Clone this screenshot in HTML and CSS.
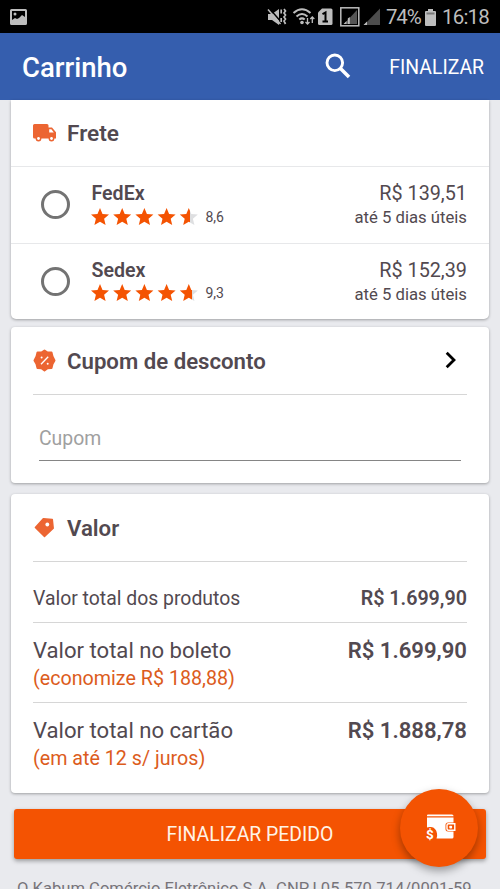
FILE: index.html
```html
<!DOCTYPE html>
<html lang="pt-BR">
<head>
<meta charset="utf-8">
<title>Carrinho</title>
<link rel="stylesheet" href="styles.css">
</head>
<body>
<svg class="defs" width="0" height="0" aria-hidden="true">
  <defs>
    <linearGradient id="part86"><stop offset=".54" stop-color="#f45302"/><stop offset=".54" stop-color="#dedfe1"/></linearGradient>
    <linearGradient id="part93"><stop offset=".7" stop-color="#f45302"/><stop offset=".7" stop-color="#dedfe1"/></linearGradient>
    <path id="star" d="M9 0l2.500 5.900 6.500.6-4.900 4.200 1.500 6.300L9 13.700 3.400 17l1.500-6.300L0 6.500l6.500-.6z"/>
    <g id="four" fill="#f45302"><use href="#star"/><use href="#star" x="22.2"/><use href="#star" x="44.4"/><use href="#star" x="66.6"/></g>
  </defs>
</svg>
<div class="screen">
  <div class="status">
    <svg class="photo" width="17" height="16" viewBox="0 0 17 16"><path fill="#bdbdbd" fill-rule="evenodd" d="M1.500 0h14Q17 0 17 1.500v13q0 1.500-1.500 1.500h-14Q0 16 0 14.500v-13Q0 0 1.500 0zM2 2v9l3-2 2 1 2-1 3-3 3 2V2z"/><circle cx="5" cy="5" r="1.500" fill="#bdbdbd"/></svg>
    <svg class="indicators" width="115" height="24" viewBox="266 5 115 24">
      <path fill="#bdbdbd" d="M268 14h4l7-5v16l-7-5h-4z"/>
      <path d="M269 8l13 15" stroke="#000" stroke-width="1.500"/>
      <path d="M268 9.500l12.500 14.500" stroke="#bdbdbd" stroke-width="1.500"/>
      <path d="M281.200 9.500v4M281.200 18v4M284 9l1.500 2-1.500 2 1.500 2-1.500 2 1.500 2-1.500 2 1.500 3" stroke="#bdbdbd" stroke-width="1.700" fill="none"/>
      <g fill="none" stroke="#bdbdbd" stroke-width="2"><path d="M293.500 13q8.500-7.500 17 0M296.500 16.500q5.500-5 11 0M299.300 19.500q2.700-2.300 5.400 0"/><path stroke-width="1.300" d="M307.500 18v6m-2-2l2 2 2-2M312.300 23v-6m-2 2l2-2 2 2"/></g>
      <circle cx="302" cy="22.500" r="1.800" fill="#bdbdbd"/>
      <path fill="#bdbdbd" d="M322 8.500h9q1.500 0 1.500 1.500v13.500q0 1.500-1.500 1.500h-11.500q-1.500 0-1.500-1.500v-11z"/>
      <path d="M322.500 14.200l3-1.700v9M322.500 21.500h5.500" fill="none" stroke="#000" stroke-width="2"/>
      <rect x="340.800" y="7.800" width="18" height="18" fill="none" stroke="#bdbdbd" stroke-width="1.500"/>
      <path fill="#555" d="M357 10v14h-13z"/>
      <path fill="#bdbdbd" d="M343.500 24l3-3v3zM347.800 18.500l2-1.500v7h-2z"/>
      <path fill="#4d4d4d" d="M380 8.500V25h-16z"/><path fill="#bdbdbd" d="M363.500 25l3.500-3.500V25z"/>
    </svg>
    <span class="pct">74%</span>
    <svg class="battery" width="11" height="17" viewBox="0 0 11 17"><path fill="#bdbdbd" d="M3 0h5v2h2q1 0 1 1v13q0 1-1 1H1q-1 0-1-1V3q0-1 1-1h2z"/><path fill="#777" d="M1.500 3.500h8V5.500h-8z"/></svg>
    <span class="clock">16:18</span>
  </div>
  <header class="toolbar">
    <h1>Carrinho</h1>
    <svg class="search" width="26" height="26" viewBox="0 0 26 26"><circle cx="9.800" cy="9.800" r="7.800" fill="none" stroke="#fff" stroke-width="2.900"/><path d="M15 15l9 9" stroke="#fff" stroke-width="3.600"/></svg>
    <span class="action">FINALIZAR</span>
  </header>

  <main>
    <section class="card freight">
      <h2 class="heading"><svg width="24" height="24" viewBox="0 0 24 24"><path fill="#ec6532" d="M1.500 3H14q1.500 0 1.500 1.500v2H19L23 11.200V17.500H1.500Q0 17.500 0 16V4.500Q0 3 1.500 3z"/><path fill="#fff" d="M16.200 8.200h2.200l2.400 3.200h-4.600z"/><g fill="#ec6532"><circle cx="5.500" cy="17.500" r="2.900"/><circle cx="18.500" cy="17.500" r="2.900"/></g><circle cx="5.500" cy="17.500" r="1.400" fill="#fff"/><circle cx="18.500" cy="17.500" r="1.400" fill="#fff"/></svg><span>Frete</span></h2>
      <div class="option">
        <i class="radio"></i>
        <div class="carrier"><strong>FedEx</strong><div class="rating"><svg width="107" height="18" viewBox="0 0 107 18"><use href="#four"/><use href="#star" x="88.800" fill="url(#part86)"/></svg><span>8,6</span></div></div>
        <div class="cost"><span class="price">R$ 139,51</span><span class="days">até 5 dias úteis</span></div>
      </div>
      <div class="option">
        <i class="radio"></i>
        <div class="carrier"><strong>Sedex</strong><div class="rating"><svg width="107" height="18" viewBox="0 0 107 18"><use href="#four"/><use href="#star" x="88.800" fill="url(#part93)"/></svg><span>9,3</span></div></div>
        <div class="cost"><span class="price">R$ 152,39</span><span class="days">até 5 dias úteis</span></div>
      </div>
    </section>

    <section class="card coupon">
      <h2 class="heading"><svg width="24" height="24" viewBox="0 0 24 24"><path fill="#ec6532" stroke="#ec6532" stroke-width="2" stroke-linejoin="round" d="M11.500 1.500L14.600 3.500 18.500 3.500 19.500 7.500 21.500 11.500 19.500 15 18.500 19 14.600 19.300 11.500 21.500 8.400 19.300 4.500 19 3.500 15 1.500 11.500 3.500 7.500 4.500 3.500 8.400 3.500z"/><path d="M8 15.200l7.200-7.400" stroke="#fff" stroke-width="1.300"/><circle cx="8.600" cy="8.500" r="1" fill="#fff"/><circle cx="14.700" cy="14.700" r="1" fill="#fff"/></svg><span>Cupom de desconto</span>
      <svg class="chevron" width="12" height="18" viewBox="0 0 12 18"><path d="M1.700 1.700L9 9l-7.300 7.300" fill="none" stroke="#000" stroke-width="2.800"/></svg></h2>
      <div class="field">Cupom</div>
    </section>

    <section class="card totals">
      <h2 class="heading"><svg width="24" height="24" viewBox="0 0 24 24"><path fill="#ec6532" stroke="#ec6532" stroke-width="1.500" stroke-linejoin="round" d="M10.300 2.800l9 .8.900 8.700-8.700 8.200L2.400 11.500z"/><circle cx="14.300" cy="8.500" r="1.900" fill="#fff"/></svg><span>Valor</span></h2>
      <div class="line products"><span>Valor total dos produtos</span><b>R$ 1.699,90</b></div>
      <div class="line big"><div><span>Valor total no boleto</span><em>(economize R$ 188,88)</em></div><b>R$ 1.699,90</b></div>
      <div class="line big"><div><span>Valor total no cartão</span><em>(em até 12 s/ juros)</em></div><b>R$ 1.888,78</b></div>
    </section>

    <div class="submit">FINALIZAR PEDIDO</div>
    <footer>O Kabum Comércio Eletrônico S.A. CNPJ 05.570.714/0001-59</footer>
  </main>
  <div class="fab"><svg width="30" height="26" viewBox="0 0 30 26"><path fill="#fff" d="M2 .5h24q1.500 0 1.500 1.500v.2H1V1.500q0-1 1-1zM1 3.400h26.500V8.500H22q-2.500 0-2.500 2.500v4q0 2.500 2.500 2.500h5.500V23q0 1.500-1.500 1.500H10.500q1-2 .5-5Q10 13.500 5 13q-2.500-.3-4 .5z"/><path fill="none" stroke="#fff" stroke-width="1.400" d="M22.500 9.800h6.300v6.400h-6.300q-1.500 0-1.500-1.500v-3.400q0-1.500 1.500-1.500z"/><rect x="23.300" y="11.800" width="2.800" height="2.800" rx=".8" fill="#fff"/></svg><span>$</span></div>
</div>
</body>
</html>
```
FILE: styles.css
```css
* { box-sizing: border-box; }
body { margin: 0; font-family: Roboto, sans-serif; color: #524950; }
.defs { position: absolute; }
.screen { position: relative; width: 500px; height: 889px; overflow: hidden; background: #e9eaee; }
h1, h2 { margin: 0; }
span, b, strong, em { white-space: nowrap; }

.status { height: 33px; background: #000; color: #bdbdbd; display: flex; align-items: center; padding: 1px 12px 0 10px; font-size: 20.5px; }
.indicators { margin-left: auto; flex: none; }
.pct { margin-left: 5px; width: 34px; letter-spacing: -1.2px; }
.battery { margin-left: 5px; margin-right: 1px; flex: none; }
.clock { margin-left: 5px; width: 46px; letter-spacing: -.8px; }

.toolbar { height: 67px; background: #355eae; color: #fff; display: flex; align-items: center; padding: 1px 16px 0 22px; }
.toolbar h1 { font-size: 27.5px; font-weight: 500; line-height: 66px; padding-top: 1px; }
.search { margin-left: auto; margin-right: 38px; position: relative; top: -1px; }
.action { font-size: 19.4px; padding-top: 1px; }

main { padding: 0 11px; }
.card { background: #fff; border-radius: 4px; box-shadow: 0 1px 3px rgba(0, 0, 0, .32); }
.heading { display: flex; align-items: center; gap: 10px; height: 67px; font-size: 22.2px; font-weight: 700; }
.heading span { font-weight: 600; }

.freight { height: 219px; border-radius: 0 0 5px 5px; }
.freight .heading { padding-left: 22px; height: 66px; }
.freight .heading span { font-size: 22.6px; }
.option { display: flex; height: 76.500px; border-top: 1px solid #e7e8ea; padding: 15px 22px 0 30px; }
.radio { width: 29px; height: 29px; margin-top: 8px; border: 2.900px solid #737373; border-width: 3px; border-radius: 50%; }
.carrier { margin-left: 21.500px; }
.carrier strong { display: block; font-size: 19.6px; line-height: 24px; font-weight: 600; }
.rating { display: flex; align-items: center; gap: 7.500px; height: 21px; font-size: 14px; margin-left: -.5px; }
.cost { margin-left: auto; text-align: right; }
.price { display: block; font-size: 19.8px; line-height: 24px; }
.days { display: block; font-size: 16.7px; line-height: 24px; }

.coupon { margin-top: 8px; height: 156px; padding: 0 22px; }
.coupon .heading, .totals .heading { border-bottom: 1px solid #d6d6d6; height: 68px; }
.chevron { margin: -1px 10px 0 auto; }
.field { margin: 21px 6px 0; height: 45px; border-bottom: 1.500px solid #858585; color: #a0a0a0; font-size: 19.4px; line-height: 46px; }

.totals { margin-top: 11px; height: 299px; padding: 0 22px; }
.line { display: flex; justify-content: space-between; }
.line b { font-weight: 600; }
.products { height: 61px; padding-top: 24px; font-size: 19.4px; line-height: 26px; border-bottom: 1px solid #d6d6d6; }
.products b { font-size: 19.7px; }
.big { height: 80px; padding-top: 13px; font-size: 22.1px; line-height: 28px; }
.big:not(:last-child) { border-bottom: 1px solid #d6d6d6; }
.big span, .big em { display: block; }
.big em { font-style: normal; font-size: 19.7px; line-height: 29px; color: #dc5c1c; }

.submit { margin: 16px 3px 0; height: 50px; border-radius: 3px; background: #f45302; color: #fff3e6; font-size: 19.4px; line-height: 52px; text-align: center; box-shadow: 0 2px 4px rgba(0, 0, 0, .35); }
footer { margin: 18px 0 0 6px; font-size: 16.6px; line-height: 24px; white-space: nowrap; color: #77747a; }

.fab { position: absolute; left: 400px; top: 789px; width: 78px; height: 78px; border-radius: 50%; background: #f45302; box-shadow: 0 4px 8px rgba(0, 0, 0, .35); color: #fff; }
.fab svg { position: absolute; left: 26px; top: 25px; }
.fab span { position: absolute; left: 26px; top: 37px; font-size: 13.5px; line-height: 17px; font-weight: 700; }
```
